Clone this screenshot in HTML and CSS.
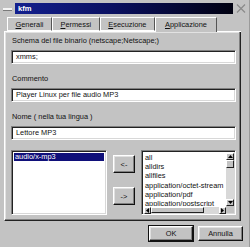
FILE: index.html
```html
<!DOCTYPE html>
<html>
<head>
<meta charset="utf-8">
<link rel="stylesheet" href="styles.css">
</head>
<body>
<div class="win">
  <div class="titlebar">
    <div class="menu-btn"><span class="dash"></span></div>
    <div class="title">kfm</div>
    <div class="close-btn">
      <svg width="10" height="9" viewBox="0 0 10 9"><path d="M1 0.5 L9 8.5 M9 0.5 L1 8.5" stroke="#8a8a8a" stroke-width="1.2" fill="none"/></svg>
    </div>
  </div>
  <div class="tabs">
    <div class="tab"><u>G</u>enerali</div>
    <div class="tab"><u>P</u>ermessi</div>
    <div class="tab"><u>E</u>secuzione</div>
    <div class="tab sel"><u>A</u>pplicazione</div>
    <div class="tab-rest"></div>
  </div>
  <div class="panel">
    <div class="label">Schema del file binario (netscape;Netscape;)</div>
    <div class="field">xmms;</div>
    <div class="label">Commento</div>
    <div class="field">Player Linux per file audio MP3</div>
    <div class="label">Nome ( nella tua lingua )</div>
    <div class="field">Lettore MP3</div>
    <div class="lists">
      <div class="list left-list">
        <div class="item sel">audio/x-mp3</div>
      </div>
      <div class="arrows">
        <div class="btn arrow-btn">&lt;-</div>
        <div class="btn arrow-btn">-&gt;</div>
      </div>
      <div class="list right-list">
        <div class="items">
          <div class="item">all</div>
          <div class="item">alldirs</div>
          <div class="item">allfiles</div>
          <div class="item">application/octet-stream</div>
          <div class="item">application/pdf</div>
          <div class="item">application/postscript</div>
        </div>
        <div class="vscroll">
          <div class="sbtn"><svg width="5" height="3" viewBox="0 0 5 3"><path d="M0 3 L2.5 0 L5 3 Z" fill="#000"/></svg></div>
          <div class="vthumb"></div>
          <div class="strack"></div>
          <div class="sbtn"><svg width="5" height="3" viewBox="0 0 5 3"><path d="M0 0 L2.5 3 L5 0 Z" fill="#000"/></svg></div>
        </div>
        <div class="hscroll">
          <div class="sbtn"><svg width="3" height="5" viewBox="0 0 3 5"><path d="M3 0 L0 2.5 L3 5 Z" fill="#000"/></svg></div>
          <div class="hthumb"></div>
          <div class="strack"></div>
          <div class="sbtn"><svg width="3" height="5" viewBox="0 0 3 5"><path d="M0 0 L3 2.5 L0 5 Z" fill="#000"/></svg></div>
        </div>
        <div class="corner"></div>
      </div>
    </div>
  </div>
  <div class="footer">
    <div class="btn foot-btn default">OK</div>
    <div class="btn foot-btn">Annulla</div>
  </div>
</div>
</body>
</html>
```

FILE: styles.css
```css
* { box-sizing: border-box; }
html, body { margin: 0; padding: 0; }
body {
  width: 250px;
  height: 247px;
  overflow: hidden;
  background: #c3c3c3;
  font-family: "Liberation Sans", Arial, sans-serif;
  font-size: 7.4px;
  color: #111;
}
.win {
  width: 250px;
  height: 247px;
  padding-top: 3px;
  background: #c3c3c3;
  border-right: 1px solid #9a9a9a;
}
.titlebar {
  display: flex;
  height: 11px;
}
.menu-btn {
  width: 15px;
  display: flex;
  align-items: center;
  padding-left: 3px;
}
.dash {
  display: block;
  width: 9px;
  height: 2px;
  background: #f4f4f4;
  box-shadow: 0 1px 0 #7a7a7a;
}
.title {
  flex: 1;
  background: linear-gradient(to right, #13208e 0%, #0a1060 45%, #000010 100%);
  color: #fff;
  font-weight: bold;
  line-height: 11px;
  padding-left: 3px;
  font-size: 7.6px;
}
.close-btn {
  width: 16px;
  display: flex;
  align-items: center;
  justify-content: center;
}
.tabs {
  display: flex;
  margin-top: 3px;
  padding-left: 7px;
  height: 14px;
  align-items: flex-end;
}
.tab {
  height: 14px;
  line-height: 13px;
  padding: 0 7.5px;
  border-top: 1px solid #fff;
  border-left: 1px solid #fff;
  border-right: 1px solid #555;
  border-bottom: 1px solid #fff;
  white-space: nowrap;
}
.tab u { text-decoration: underline; text-underline-offset: 1px; }
.tab.sel {
  height: 15px;
  padding: 0 9px;
  border-bottom: none;
  line-height: 14px;
  margin-bottom: -1px;
  position: relative;
  background: #c3c3c3;
  z-index: 1;
}
.tab-rest {
  flex: 1;
  margin-right: 8px;
  height: 1px;
  border-top: 1px solid #fff;
  align-self: flex-end;
  margin-bottom: -1px;
}
.panel {
  margin: 0 8px 0 4px;
  height: 190px;
  border-top: 1px solid #fff;
  border-left: 1px solid #fff;
  border-right: 1px solid #222;
  border-bottom: 1px solid #222;
  box-shadow: inset -1px -1px 0 #808080, inset 1px 1px 0 #e2e2e2;
  padding: 4px 4px 0 6px;
}
.label {
  line-height: 10px;
  height: 10px;
  margin-bottom: 4px;
  padding-left: 1px;
  white-space: nowrap;
}
.field {
  height: 14px;
  background: #fff;
  color: #111;
  border-top: 1px solid #808080;
  border-left: 1px solid #808080;
  border-right: 1px solid #fff;
  border-bottom: 1px solid #fff;
  box-shadow: inset 1px 1px 0 #222, inset -1px -1px 0 #d8d8d8;
  line-height: 12px;
  padding-left: 4px;
  margin-bottom: 10px;
  white-space: nowrap;
}
.lists {
  display: flex;
  height: 65px;
  gap: 6px;
}
.list {
  background: #fff;
  border-top: 1px solid #808080;
  border-left: 1px solid #808080;
  border-right: 1px solid #fff;
  border-bottom: 1px solid #fff;
  box-shadow: inset 1px 1px 0 #222, inset -1px -1px 0 #d8d8d8;
  padding: 2px;
  overflow: hidden;
}
.left-list { width: 96px; }
.item {
  line-height: 9.2px;
  height: 9.2px;
  white-space: nowrap;
  padding-left: 1px;
}
.item.sel {
  background: #10107a;
  color: #fff;
  line-height: 8px;
  height: 8px;
}
.arrows {
  width: 22px;
  display: flex;
  flex-direction: column;
  padding-top: 5px;
  gap: 14px;
}
.btn {
  background: #c3c3c3;
  border-top: 1px solid #fff;
  border-left: 1px solid #fff;
  border-right: 1px solid #111;
  border-bottom: 1px solid #111;
  box-shadow: inset -1px -1px 0 #808080, inset 1px 1px 0 #e0e0e0;
  display: flex;
  align-items: center;
  justify-content: center;
  white-space: nowrap;
}
.arrow-btn { height: 18px; }
.right-list {
  flex: 1;
  display: grid;
  grid-template-columns: 1fr 8px;
  grid-template-rows: 1fr 7px;
  padding: 2px 1px 1px 2px;
}
.items { overflow: hidden; }
.vscroll {
  display: flex;
  flex-direction: column;
  background: #d8d8d8;
}
.hscroll {
  display: flex;
  background: #d8d8d8;
  margin-top: 1px;
}
.sbtn {
  width: 8px;
  height: 7px;
  flex: none;
  background: #c3c3c3;
  border-top: 1px solid #fff;
  border-left: 1px solid #fff;
  border-right: 1px solid #222;
  border-bottom: 1px solid #222;
  display: flex;
  align-items: center;
  justify-content: center;
}
.hscroll .sbtn { width: 7px; height: 7px; }
.vthumb {
  height: 8px;
  flex: none;
  background: #c3c3c3;
  border-top: 1px solid #fff;
  border-left: 1px solid #fff;
  border-right: 1px solid #222;
  border-bottom: 1px solid #222;
}
.hthumb {
  width: 53px;
  flex: none;
  background: #c3c3c3;
  border-top: 1px solid #fff;
  border-left: 1px solid #fff;
  border-right: 1px solid #222;
  border-bottom: 1px solid #222;
}
.strack { flex: 1; }
.corner { background: #c3c3c3; }
.footer {
  display: flex;
  justify-content: flex-end;
  gap: 5px;
  margin-top: 5px;
  padding-right: 6px;
}
.foot-btn { height: 15px; }
.foot-btn.default {
  width: 44px;
  outline: 1px solid #111;
}
.foot-btn:last-child { width: 45px; }
```
